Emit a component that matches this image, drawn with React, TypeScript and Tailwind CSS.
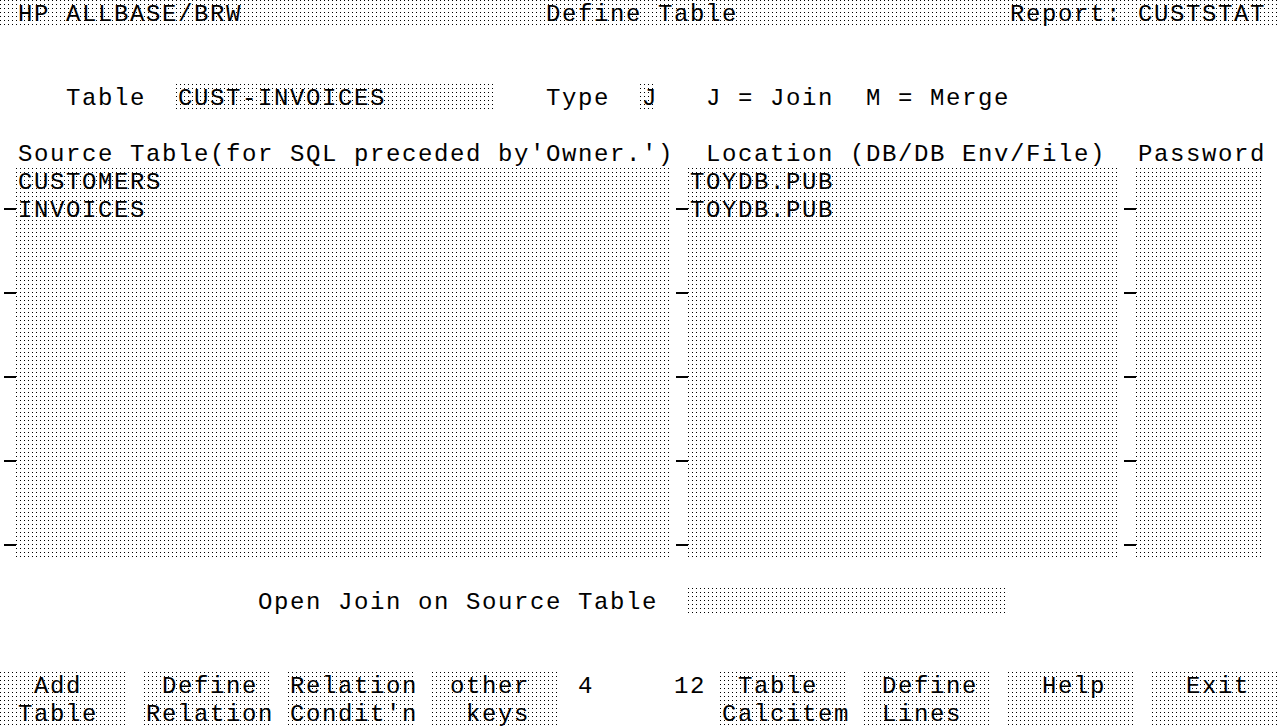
import React from "react";

const PAT =
  "bg-black [background-image:linear-gradient(to_right,transparent_1px,#fff_1px),linear-gradient(to_bottom,transparent_1px,#fff_1px)] [background-size:4px_4px]";

type Seg = { c: number; t?: string; f?: boolean; m?: boolean };

function Cell({ c, t = "", f = false, m = false, last = false }: Seg & { last?: boolean }) {
  return (
    <div
      style={{ width: c * 16 }}
      className={`shrink-0 whitespace-pre ${last ? "h-[26px]" : "h-[28px]"} ${f ? PAT : ""}`}
    >
      {m ? (
        <div className="ml-[4px] mt-[12px] w-[12px] h-[2px] bg-black" />
      ) : last ? (
        <span className="block ml-[2px] mt-[4px] h-[22px] leading-[22px] tracking-[1.6px] mr-[-4px]">{t}</span>
      ) : (
        <span className="block ml-[2px] mt-[1px] h-[27px] tracking-[1.6px] mr-[-4px]">{t}</span>
      )}
    </div>
  );
}

function Row({ segs, last = false }: { segs: Seg[]; last?: boolean }) {
  return (
    <div className={`flex ${last ? "h-[26px]" : "h-[28px]"}`}>
      {segs.map((s, i) => (
        <Cell key={i} {...s} last={last} />
      ))}
    </div>
  );
}

const blank: Seg[] = [{ c: 80 }];

const tableRows: Seg[][] = Array.from({ length: 14 }, (_, i) => {
  const r = i + 6;
  const mark = r === 7 || r === 10 || r === 13 || r === 16 || r === 19;
  const src = r === 6 ? "CUSTOMERS" : r === 7 ? "INVOICES" : "";
  const loc = r === 6 || r === 7 ? "TOYDB.PUB" : "";
  return [
    { c: 1, m: mark },
    { c: 41, t: src, f: true },
    { c: 1, m: mark },
    { c: 27, t: loc, f: true },
    { c: 1, m: mark },
    { c: 8, f: true },
    { c: 1 },
  ];
});

const keysTop: Seg[] = [
  { c: 8, t: "  Add", f: true },
  { c: 1 },
  { c: 8, t: " Define", f: true },
  { c: 1 },
  { c: 8, t: "Relation", f: true },
  { c: 1 },
  { c: 8, t: " other", f: true },
  { c: 1 },
  { c: 9, t: "4     12" },
  { c: 8, t: " Table", f: true },
  { c: 1 },
  { c: 8, t: " Define", f: true },
  { c: 1 },
  { c: 8, t: "  Help", f: true },
  { c: 1 },
  { c: 8, t: "  Exit", f: true },
];

const keysBottom: Seg[] = [
  { c: 8, t: " Table", f: true },
  { c: 1 },
  { c: 8, t: "Relation", f: true },
  { c: 1 },
  { c: 8, t: "Condit'n", f: true },
  { c: 1 },
  { c: 8, t: "  keys", f: true },
  { c: 1 },
  { c: 9 },
  { c: 8, t: "Calcitem", f: true },
  { c: 1 },
  { c: 8, t: " Lines", f: true },
  { c: 1 },
  { c: 8, f: true },
  { c: 1 },
  { c: 8, f: true },
];

export default function App() {
  const rows: Seg[][] = [
    [
      { c: 1, f: true },
      { c: 33, t: "HP ALLBASE/BRW", f: true },
      { c: 29, t: "Define Table", f: true },
      { c: 17, t: "Report: CUSTSTAT", f: true },
    ],
    blank,
    blank,
    [
      { c: 4 },
      { c: 7, t: "Table" },
      { c: 20, t: "CUST-INVOICES", f: true },
      { c: 3 },
      { c: 6, t: "Type" },
      { c: 1, t: "J", f: true },
      { c: 3 },
      { c: 10, t: "J = Join" },
      { c: 26, t: "M = Merge" },
    ],
    blank,
    [
      { c: 1 },
      { c: 43, t: "Source Table(for SQL preceded by'Owner.')" },
      { c: 27, t: "Location (DB/DB Env/File)" },
      { c: 9, t: "Password" },
    ],
    ...tableRows,
    blank,
    [
      { c: 16 },
      { c: 27, t: "Open Join on Source Table" },
      { c: 20, f: true },
      { c: 17 },
    ],
    blank,
    blank,
    keysTop,
  ];

  return (
    <div className="w-[1279px] h-[726px] overflow-hidden bg-white text-black font-['Liberation_Mono',monospace] text-[24px] leading-[28px]">
      {rows.map((segs, i) => (
        <Row key={i} segs={segs} />
      ))}
      <Row segs={keysBottom} last />
    </div>
  );
}
